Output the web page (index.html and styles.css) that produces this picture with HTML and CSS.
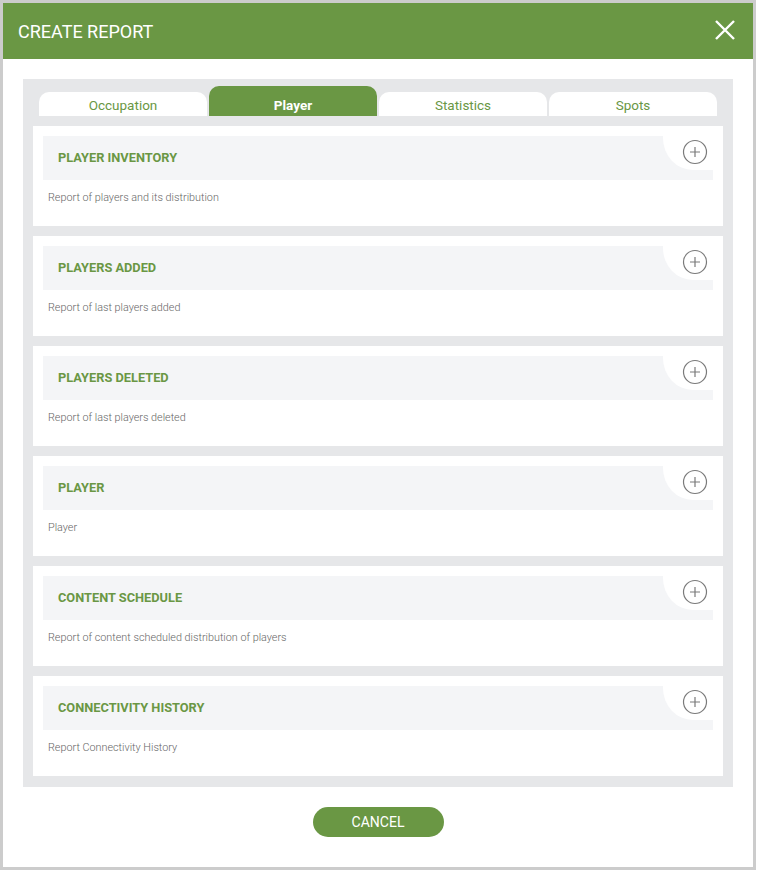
FILE: index.html
```html
<!DOCTYPE html>
<html>
<head>
<meta charset="utf-8">
<link rel="stylesheet" href="styles.css">
</head>
<body>
<div class="dialog">
  <div class="header">
    <div class="title">CREATE REPORT</div>
    <svg class="close" width="20" height="20" viewBox="0 0 20 20"><path d="M1 1 L19 19 M19 1 L1 19" stroke="#fff" stroke-width="2.4" fill="none"/></svg>
  </div>
  <div class="body">
    <div class="panel">
      <div class="tabs">
        <div class="tab">Occupation</div>
        <div class="tab active">Player</div>
        <div class="tab">Statistics</div>
        <div class="tab">Spots</div>
      </div>
      <div class="cards">
        <div class="card">
          <div class="band"><span class="name">PLAYER INVENTORY</span><div class="notch"></div>
            <svg class="plus" width="26" height="26" viewBox="0 0 26 26"><circle cx="13" cy="13" r="11.5" stroke="#7a7a7a" stroke-width="1.2" fill="#fff"/><path d="M13 8 V18 M8 13 H18" stroke="#7a7a7a" stroke-width="1.2"/></svg></div>
          <div class="desc">Report of players and its distribution</div>
        </div>
        <div class="card">
          <div class="band"><span class="name">PLAYERS ADDED</span><div class="notch"></div>
            <svg class="plus" width="26" height="26" viewBox="0 0 26 26"><circle cx="13" cy="13" r="11.5" stroke="#7a7a7a" stroke-width="1.2" fill="#fff"/><path d="M13 8 V18 M8 13 H18" stroke="#7a7a7a" stroke-width="1.2"/></svg></div>
          <div class="desc">Report of last players added</div>
        </div>
        <div class="card">
          <div class="band"><span class="name">PLAYERS DELETED</span><div class="notch"></div>
            <svg class="plus" width="26" height="26" viewBox="0 0 26 26"><circle cx="13" cy="13" r="11.5" stroke="#7a7a7a" stroke-width="1.2" fill="#fff"/><path d="M13 8 V18 M8 13 H18" stroke="#7a7a7a" stroke-width="1.2"/></svg></div>
          <div class="desc">Report of last players deleted</div>
        </div>
        <div class="card">
          <div class="band"><span class="name">PLAYER</span><div class="notch"></div>
            <svg class="plus" width="26" height="26" viewBox="0 0 26 26"><circle cx="13" cy="13" r="11.5" stroke="#7a7a7a" stroke-width="1.2" fill="#fff"/><path d="M13 8 V18 M8 13 H18" stroke="#7a7a7a" stroke-width="1.2"/></svg></div>
          <div class="desc">Player</div>
        </div>
        <div class="card">
          <div class="band"><span class="name">CONTENT SCHEDULE</span><div class="notch"></div>
            <svg class="plus" width="26" height="26" viewBox="0 0 26 26"><circle cx="13" cy="13" r="11.5" stroke="#7a7a7a" stroke-width="1.2" fill="#fff"/><path d="M13 8 V18 M8 13 H18" stroke="#7a7a7a" stroke-width="1.2"/></svg></div>
          <div class="desc">Report of content scheduled distribution of players</div>
        </div>
        <div class="card">
          <div class="band"><span class="name">CONNECTIVITY HISTORY</span><div class="notch"></div>
            <svg class="plus" width="26" height="26" viewBox="0 0 26 26"><circle cx="13" cy="13" r="11.5" stroke="#7a7a7a" stroke-width="1.2" fill="#fff"/><path d="M13 8 V18 M8 13 H18" stroke="#7a7a7a" stroke-width="1.2"/></svg></div>
          <div class="desc">Report Connectivity History</div>
        </div>
      </div>
    </div>
    <div class="actions"><button class="cancel">CANCEL</button></div>
  </div>
</div>
</body>
</html>
```
FILE: styles.css
```css
html, body { margin: 0; padding: 0; background: #fff; }
body { font-family: Roboto, "Liberation Sans", Arial, sans-serif; }
.dialog {
  width: 750px;
  height: 864px;
  border: 3px solid #cccccc;
  background: #fff;
  display: flex;
  flex-direction: column;
}
.header {
  height: 56px;
  background: #6a9744;
  display: flex;
  align-items: center;
  justify-content: space-between;
  padding: 0 18px 0 15px;
  flex-shrink: 0;
}
.title {
  color: #fff;
  font-size: 18px;
  font-weight: 400;
}
.close { display: block; margin-top: -2px; }
.body {
  padding: 20px 20px 0 20px;
  display: flex;
  flex-direction: column;
}
.panel {
  background: #e6e7e9;
  padding: 7px 10px 11px 10px;
}
.tabs {
  display: flex;
  gap: 2px;
  margin: 0 6px;
  align-items: flex-end;
  height: 30px;
}
.tab {
  flex: 1;
  height: 24px;
  background: #fff;
  border-radius: 10px 10px 0 0;
  color: #6a9744;
  font-size: 13.5px;
  text-align: center;
  line-height: 26px;
}
.tab.active {
  height: 30px;
  background: #6a9744;
  color: #fff;
  font-weight: 700;
  line-height: 38px;
}
.cards {
  margin-top: 10px;
  display: flex;
  flex-direction: column;
  gap: 10px;
}
.card {
  background: #fff;
  height: 100px;
  box-sizing: border-box;
  padding: 10px;
}
.band {
  position: relative;
  height: 44px;
  background: #f4f5f7;
  display: flex;
  align-items: center;
  padding-left: 15px;
}
.name {
  color: #6a9744;
  font-weight: 700;
  font-size: 12.8px;
  margin-top: -2px;
}
.notch {
  position: absolute;
  right: 0;
  top: 0;
  width: 50px;
  height: 34px;
  background: #fff;
  border-bottom-left-radius: 30px 32px;
}
.plus {
  position: absolute;
  right: 5px;
  top: 3px;
}
.desc {
  color: #666;
  font-size: 10.8px;
  font-weight: 300;
  padding: 11px 0 0 5px;
}
.actions {
  display: flex;
  justify-content: center;
  padding-top: 20px;
}
.cancel {
  width: 131px;
  height: 30px;
  border: none;
  border-radius: 15px;
  background: #6a9744;
  color: #fff;
  font-family: Roboto, "Liberation Sans", Arial, sans-serif;
  font-size: 14px;
  padding: 0;
}
```
